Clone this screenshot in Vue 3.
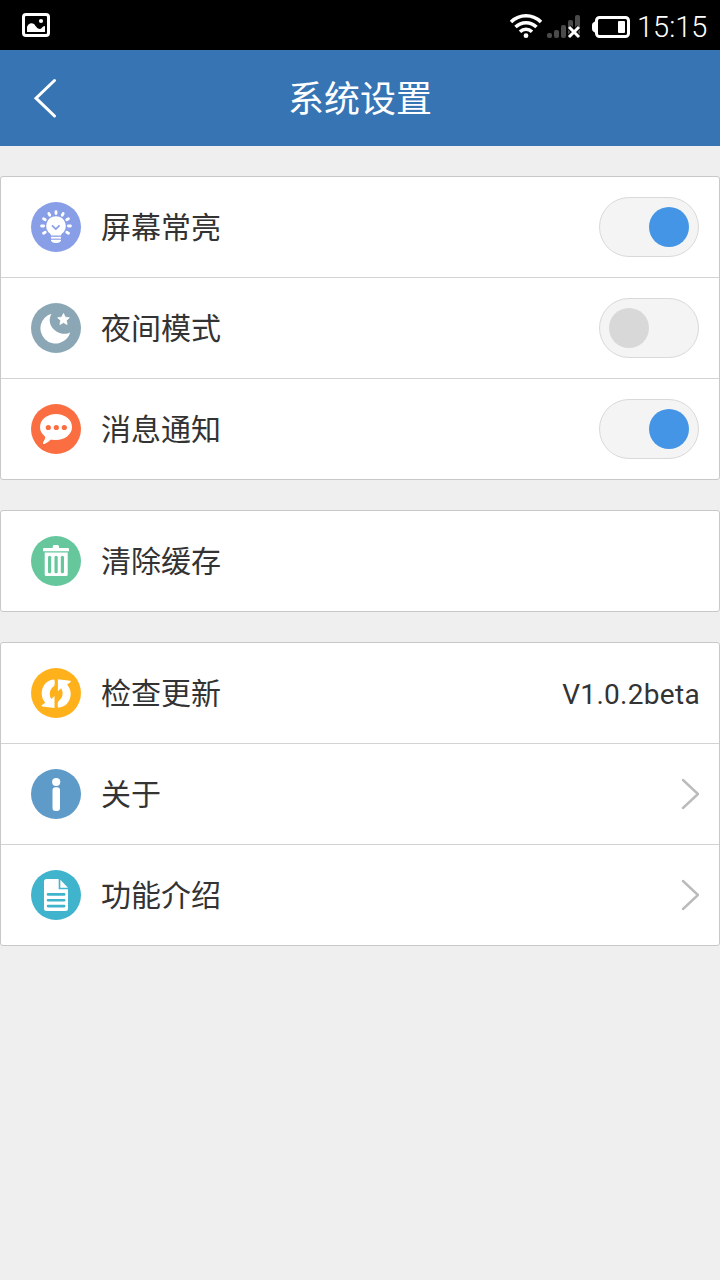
<script setup>
import { reactive } from 'vue'

const groups = reactive([
  [
    { icon: 'bulb', color: '#889ee7', label: '屏幕常亮', on: true },
    { icon: 'moon', color: '#8ba6b5', label: '夜间模式', on: false },
    { icon: 'chat', color: '#fa6e41', label: '消息通知', on: true }
  ],
  [
    { icon: 'trash', color: '#66c79c', label: '清除缓存' }
  ],
  [
    { icon: 'refresh', color: '#ffb11b', label: '检查更新', value: 'V1.0.2beta' },
    { icon: 'info', color: '#5f9bc9', label: '关于', link: true },
    { icon: 'doc', color: '#40b3cd', label: '功能介绍', link: true }
  ]
])

const rays = [-120, -90, -60, -30, 0, 30, 60, 90, 120]

function toggle(row) {
  if ('on' in row) row.on = !row.on
}
</script>

<template>
  <div class="screen">
    <div class="status-bar">
      <svg class="picture" width="28" height="24" viewBox="0 0 28 24">
        <rect x="1.5" y="1.5" width="25" height="21" rx="2.5" fill="none" stroke="#fff" stroke-width="3"/>
        <circle cx="19" cy="8" r="2.1" fill="#fff"/>
        <path d="M5 19V14C6 11 9 9 12 11C14 13 15 16 18 16C20 16 20 13 23 13V19Z" fill="#fff"/>
      </svg>
      <div class="status-right">
        <svg class="wifi" width="32" height="26" viewBox="0 0 32 26" fill="none" stroke="#fff" stroke-width="3.500">
          <path d="M1 9C9.500 .7 22.500 .7 31 9"/>
          <path d="M5.500 14C11.500 8.200 20.500 8.200 26.500 14"/>
          <path d="M10 18.800C13.500 15.500 18.500 15.500 22 18.800"/>
          <circle cx="16" cy="22.700" r="2.400" fill="#fff" stroke="none"/>
        </svg>
        <svg class="signal" width="34" height="26" viewBox="0 0 34 26">
          <g fill="#4a4a4a">
            <rect x="0" y="19" width="5" height="5" rx="2"/>
            <rect x="7" y="16" width="5" height="8" rx="2"/>
            <rect x="14" y="11" width="5" height="13" rx="2"/>
            <rect x="21" y="6" width="5" height="18" rx="2"/>
            <rect x="28" y="1" width="5" height="23" rx="2"/>
          </g>
          <path d="M22 13L32 23M32 13L22 23" stroke="#000" stroke-width="5"/>
          <path d="M22 13L32 23M32 13L22 23" stroke="#fff" stroke-width="3"/>
        </svg>
        <svg class="battery" width="38" height="22" viewBox="0 0 38 22">
          <rect x="4.500" y="1.500" width="32" height="19" rx="3" fill="none" stroke="#fff" stroke-width="3"/>
          <path d="M5 4L2 6Q0 7 0 9V13Q0 15 2 16L5 18Z" fill="#fff"/>
          <rect x="26" y="5" width="7" height="12" rx="1" fill="#fff"/>
        </svg>
        <span class="time">15:15</span>
      </div>
    </div>

    <header class="title-bar">
      <svg class="back" width="24" height="40" viewBox="0 0 24 40">
        <path d="M21.500 2.500L3 20.200L21.500 38" fill="none" stroke="#fff" stroke-width="3" stroke-linecap="round"/>
      </svg>
      <h1>系统设置</h1>
    </header>

    <main>
      <section v-for="(group, i) in groups" :key="i" class="group">
        <div v-for="row in group" :key="row.icon" class="row" @click="toggle(row)">
          <svg class="icon" width="50" height="50" viewBox="0 0 50 50">
            <circle cx="25" cy="25" r="25" :fill="row.color"/>

            <g v-if="row.icon === 'bulb'" fill="#fff">
              <path
                v-for="angle in rays"
                :key="angle"
                d="M25 9.600V11.600"
                :transform="`rotate(${angle} 25 24)`"
                stroke="#fff"
                stroke-width="2.800"
                stroke-linecap="round"
              />
              <path d="M25 14.300A9.700 9.700 0 0 1 30.500 32L30 33.500H20L19.500 32A9.700 9.700 0 0 1 25 14.300Z"/>
              <rect x="20" y="34.800" width="10" height="1.800"/>
              <path d="M20 37.800H30V38.500Q29 41 25 41T20 38.500Z"/>
              <path d="M21 23.300L24.800 27L28.600 23.300" fill="none" :stroke="row.color" stroke-width="1.700"/>
            </g>

            <g v-else-if="row.icon === 'moon'" fill="#fff">
              <path d="M20.500 10.700A15.200 15.200 0 1 0 39.300 29.300C36 31.500 30 31.500 25.500 28.500C18.500 24 17 17 20.500 10.700Z"/>
              <path
                d="M32.500 10.500L34.300 14.200L38.300 14.700L35.400 17.500L36.100 21.500L32.500 19.600L28.900 21.500L29.600 17.500L26.700 14.700L30.700 14.200Z"
                stroke="#fff"
                stroke-width=".8"
                stroke-linejoin="round"
              />
            </g>

            <g v-else-if="row.icon === 'chat'" fill="#fff">
              <ellipse cx="25" cy="23" rx="16" ry="13"/>
              <path d="M14.500 31.500Q14.500 35 12 38.500Q11.500 40.500 13.500 40Q17 38.500 20 35.500H25Z"/>
              <g :fill="row.color">
                <circle cx="17.300" cy="23.500" r="2.600"/>
                <circle cx="25.300" cy="23.500" r="2.600"/>
                <circle cx="33.300" cy="23.500" r="2.600"/>
              </g>
            </g>

            <g v-else-if="row.icon === 'trash'" fill="#fff">
              <path d="M12 15.200V13Q12 12 13 12H21.700V10.500Q21.700 9 23.200 9H26.500Q28 9 28 10.500V12H37Q38 12 38 13V15.200Z"/>
              <path d="M13.700 16.500H36.700V38.500Q36.700 40 35.200 40H15.200Q13.700 40 13.700 38.500Z"/>
              <g :fill="row.color">
                <rect x="17" y="19.700" width="3.200" height="17.500" rx="1.500"/>
                <rect x="23.500" y="19.700" width="3.200" height="17.500" rx="1.500"/>
                <rect x="29.800" y="19.700" width="3.200" height="17.500" rx="1.500"/>
              </g>
            </g>

            <g v-else-if="row.icon === 'refresh'" fill="#fff">
              <path
                v-for="angle in [0, 180]"
                :key="angle"
                d="M22 11.600C14 13.200 10.700 19.500 10.700 25.500C10.700 29 12 32 14.300 34.800L10.700 37.300Q10 38.300 11.300 38.500L23.500 40V28L20.300 31C17.800 27 18.300 21.500 22.500 18.500Q23.700 17.500 23.700 16V13Q23.600 11.300 22 11.600Z"
                :transform="`rotate(${angle} 25.200 25.600)`"
              />
            </g>

            <g v-else-if="row.icon === 'info'" fill="#fff">
              <circle cx="25.200" cy="13" r="4.100"/>
              <rect x="21.500" y="18.300" width="7.500" height="23.700" rx="3"/>
            </g>

            <g v-else fill="#fff">
              <path d="M15.500 9H27.700V19.300H37V38.500Q37 41 34.500 41H15.500Q13 41 13 38.500V11.500Q13 9 15.500 9Z"/>
              <path d="M29.300 9.700L37 17.800H29.300Z"/>
              <path
                d="M17 24.400H33.200M17 30.300H33.200M17 36.100H33.200"
                :stroke="row.color"
                stroke-width="2.600"
                stroke-linecap="round"
              />
            </g>
          </svg>

          <span class="label">{{ row.label }}</span>

          <span v-if="'on' in row" class="switch" :class="{ on: row.on }"><i class="knob"></i></span>
          <span v-else-if="row.value" class="value">{{ row.value }}</span>
          <svg v-else-if="row.link" class="arrow" width="18" height="32" viewBox="0 0 18 32">
            <path d="M2 2L17 16L2 30" fill="none" stroke="#bbb" stroke-width="2.400" stroke-linecap="round"/>
          </svg>
        </div>
      </section>
    </main>
  </div>
</template>

<style>
body {
  margin: 0;
  background: #efefef;
}
</style>

<style scoped>
.screen {
  width: 720px;
  min-height: 1280px;
  background: #efefef;
  color: #333;
  font-family: Roboto, "Noto Sans CJK SC", sans-serif;
}

svg {
  display: block;
  flex: none;
}

.status-bar {
  display: flex;
  justify-content: space-between;
  align-items: flex-start;
  height: 50px;
  box-sizing: border-box;
  padding: 13px 12px 0 22px;
  background: #000;
}

.status-right {
  display: flex;
  align-items: flex-start;
}

.wifi {
  margin-right: 5px;
}

.signal {
  margin: 1px 11px 0 0;
}

.battery {
  margin: 3px 7px 0 0;
}

.time {
  width: 71px;
  line-height: 28px;
  color: #fff;
  font-size: 29px;
  font-weight: 300;
  white-space: nowrap;
}

.title-bar {
  display: grid;
  grid-template-columns: 120px 1fr 120px;
  align-items: center;
  height: 96px;
  background: #3774b3;

  .back {
    margin-left: 33px;
  }

  h1 {
    margin: 0;
    padding-top: 4px;
    color: #fff;
    font-size: 36px;
    font-weight: 400;
    line-height: 52px;
    text-align: center;
  }
}

main {
  display: flex;
  flex-direction: column;
  gap: 30px;
  padding-top: 30px;
}

.group {
  border: 1px solid #c8c8c8;
  border-radius: 3px;
  background: #fff;
}

.row {
  display: flex;
  align-items: center;
  height: 100px;
  padding: 0 20px 0 30px;

  & + .row {
    border-top: 1px solid #d3d3d3;
  }
}

.label {
  flex: 1;
  margin-left: 20px;
  padding-top: 2px;
  font-size: 30px;
  line-height: 44px;
}

.switch {
  box-sizing: border-box;
  width: 100px;
  height: 60px;
  padding: 9px;
  border: 1px solid #d9d9d9;
  border-radius: 30px;
  background: #f4f4f4;

  .knob {
    display: block;
    width: 40px;
    height: 40px;
    border-radius: 50%;
    background: #d8d8d8;
  }

  &.on .knob {
    margin-left: auto;
    background: #4595e6;
  }
}

.value {
  margin-right: -1px;
  padding-top: 2px;
  font-size: 28px;
  letter-spacing: .3px;
}
</style>
